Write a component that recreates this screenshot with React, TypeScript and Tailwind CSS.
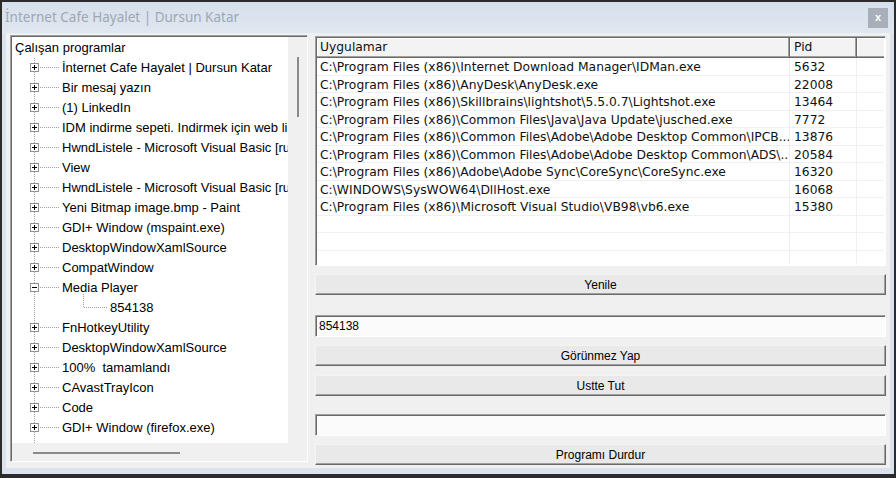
import React from 'react';

type Kind = 'plus' | 'minus' | 'child';

const treeItems: { t: string; k: Kind }[] = [
    { t: 'İnternet Cafe Hayalet | Dursun Katar', k: 'plus' },
    { t: 'Bir mesaj yazın', k: 'plus' },
    { t: '(1) LinkedIn', k: 'plus' },
    { t: 'IDM indirme sepeti. Indirmek için web linklerini buraya sürükleyin', k: 'plus' },
    { t: 'HwndListele - Microsoft Visual Basic [run]', k: 'plus' },
    { t: 'View', k: 'plus' },
    { t: 'HwndListele - Microsoft Visual Basic [run]', k: 'plus' },
    { t: 'Yeni Bitmap image.bmp - Paint', k: 'plus' },
    { t: 'GDI+ Window (mspaint.exe)', k: 'plus' },
    { t: 'DesktopWindowXamlSource', k: 'plus' },
    { t: 'CompatWindow', k: 'plus' },
    { t: 'Media Player', k: 'minus' },
    { t: '854138', k: 'child' },
    { t: 'FnHotkeyUtility', k: 'plus' },
    { t: 'DesktopWindowXamlSource', k: 'plus' },
    { t: '100%  tamamlandı', k: 'plus' },
    { t: 'CAvastTrayIcon', k: 'plus' },
    { t: 'Code', k: 'plus' },
    { t: 'GDI+ Window (firefox.exe)', k: 'plus' },
    { t: 'Dev kontrolleri bekleniyor', k: 'plus' },
];

const apps: [string, string][] = [
    ['C:\\Program Files (x86)\\Internet Download Manager\\IDMan.exe', '5632'],
    ['C:\\Program Files (x86)\\AnyDesk\\AnyDesk.exe', '22008'],
    ['C:\\Program Files (x86)\\Skillbrains\\lightshot\\5.5.0.7\\Lightshot.exe', '13464'],
    ['C:\\Program Files (x86)\\Common Files\\Java\\Java Update\\jusched.exe', '7772'],
    ['C:\\Program Files (x86)\\Common Files\\Adobe\\Adobe Desktop Common\\IPCB...', '13876'],
    ['C:\\Program Files (x86)\\Common Files\\Adobe\\Adobe Desktop Common\\ADS\\...', '20584'],
    ['C:\\Program Files (x86)\\Adobe\\Adobe Sync\\CoreSync\\CoreSync.exe', '16320'],
    ['C:\\WINDOWS\\SysWOW64\\DllHost.exe', '16068'],
    ['C:\\Program Files (x86)\\Microsoft Visual Studio\\VB98\\vb6.exe', '15380'],
    ['', ''],
    ['', ''],
    ['', ''],
    ['', ''],
];

function Connector({ kind }: { kind: Kind }) {
    const dot = { stroke: '#a0a0a0', strokeWidth: 1, strokeDasharray: '1 1' };
    if (kind === 'child') {
        return (
            <svg width="98" height="20" className="shrink-0 overflow-visible" shapeRendering="crispEdges">
                <line x1="22.5" y1="0" x2="22.5" y2="20" {...dot} />
                <line x1="71.5" y1="-4" x2="71.5" y2="10" {...dot} />
                <line x1="72" y1="9.5" x2="96" y2="9.5" {...dot} />
            </svg>
        );
    }
    return (
        <svg width="50" height="20" className="shrink-0" shapeRendering="crispEdges">
            <line x1="22.5" y1="0" x2="22.5" y2="5" {...dot} />
            <line x1="22.5" y1="14" x2="22.5" y2="20" {...dot} />
            <rect x="18.5" y="5.5" width="8" height="8" fill="#fff" stroke="#919191" />
            <line x1="20" y1="9.5" x2="25" y2="9.5" stroke="#000" />
            {kind === 'plus' && <line x1="22.5" y1="7" x2="22.5" y2="12" stroke="#000" />}
            <line x1="28" y1="9.5" x2="48" y2="9.5" {...dot} />
        </svg>
    );
}

function Button({ label }: { label: string }) {
    return (
        <button className="block h-[21px] w-full bg-[#e9e9e9] border border-t-[#f4f4f4] border-l-[#f4f4f4] border-b-[#696969] border-r-[#696969] shadow-[inset_-1px_-1px_0_#a0a0a0] text-[12px] text-black leading-none">
            {label}
        </button>
    );
}

function Input({ value }: { value: string }) {
    return (
        <div className="h-[22px] w-full bg-[#fbfbfb] border border-t-[#a0a0a0] border-l-[#a0a0a0] border-b-[#fff] border-r-[#fff] shadow-[inset_1px_1px_0_#696969] flex items-center pl-[3px] text-[12px] text-black">
            {value}
        </div>
    );
}

export default function App() {
    return (
        <div className="w-[896px] h-[478px] bg-[#2b2b2b] p-[2px] pb-[4px] font-['Liberation_Sans',Arial,sans-serif]">
            <div className="h-full flex flex-col bg-[#dbe4ee] px-[4px] pb-[6px]">
                {/* title bar */}
                <div className="shrink-0 h-[31px] -mx-[4px] flex items-center justify-between pl-[3px] pr-[6px] bg-gradient-to-b from-[#d6e0eb] to-[#dfe7f0]">
                    <span className="font-['Noto_Sans',sans-serif] text-[13.5px] text-[#9ea7b1]">İnternet Cafe Hayalet | Dursun Katar</span>
                    <div className="w-[20px] h-[20px] bg-[#a7b0b9] flex items-center justify-center text-white font-bold text-[11px] leading-none">x</div>
                </div>

                {/* client */}
                <div className="flex-1 min-h-0 bg-[#f0f0f0] flex gap-[7px] px-[4px] pt-[2px] pb-[2px]">
                    {/* tree */}
                    <div className="w-[298px] h-[427px] border border-t-[#a0a0a0] border-l-[#a0a0a0] border-b-[#fff] border-r-[#fff] shadow-[inset_1px_1px_0_#696969] p-[1px]">
                        <div className="h-full grid grid-cols-[276px_18px] grid-rows-[406px_17px]">
                            <div className="bg-white overflow-hidden text-[13px] text-black pt-[1px]">
                                <div className="h-[20px] flex items-center pl-[3px] whitespace-nowrap">Çalışan programlar</div>
                                {treeItems.map((it, i) => (
                                    <div key={i} className="h-[20px] flex items-center whitespace-pre">
                                        <Connector kind={it.k} />
                                        <span>{it.t}</span>
                                    </div>
                                ))}
                            </div>
                            <div className="bg-[#f0f0f0] flex justify-center pt-[20px]">
                                <div className="w-[2px] h-[60px] bg-[#8a8a8a] ml-[2px]" />
                            </div>
                            <div className="bg-[#f0f0f0] pl-[21px] pt-[9px]">
                                <div className="w-[147px] h-[2px] bg-[#8a8a8a]" />
                            </div>
                            <div className="bg-[#f0f0f0]" />
                        </div>
                    </div>

                    {/* right column */}
                    <div className="flex-1 flex flex-col pt-[1px]">
                        <div className="shrink-0 h-[230px] bg-white border border-t-[#a0a0a0] border-l-[#a0a0a0] border-b-[#fff] border-r-[#fff] shadow-[inset_1px_1px_0_#696969] p-[1px] overflow-hidden font-['DejaVu_Sans',Verdana,sans-serif] text-[12.3px] text-[#111]">
                            <div className="flex h-[20px] bg-[#f3f3f3]">
                                <div className="w-[473px] border-r border-b border-[#696969] shadow-[inset_-1px_-1px_0_#a0a0a0,inset_1px_1px_0_#fff] flex items-center pl-[3px]">Uygulamar</div>
                                <div className="w-[67px] border-r border-b border-[#696969] shadow-[inset_-1px_-1px_0_#a0a0a0,inset_1px_1px_0_#fff] flex items-center pl-[4px]">Pid</div>
                                <div className="flex-1 border-b border-[#696969] shadow-[inset_0_-1px_0_#a0a0a0,inset_1px_1px_0_#fff]" />
                            </div>
                            {apps.map(([p, pid], i) => (
                                <div key={i} className="flex h-[17.5px] border-b border-[#f0f0f0] whitespace-nowrap">
                                    <div className="w-[473px] border-r border-[#f0f0f0] flex items-center pl-[3px] pt-[2px] overflow-hidden">{p}</div>
                                    <div className="w-[67px] border-r border-[#f0f0f0] flex items-center pl-[4px] pt-[2px]">{pid}</div>
                                    <div className="flex-1" />
                                </div>
                            ))}
                        </div>
                        <div className="mt-[8px]"><Button label="Yenile" /></div>
                        <div className="mt-[20px]"><Input value="854138" /></div>
                        <div className="mt-[8px]"><Button label="Görünmez Yap" /></div>
                        <div className="mt-[9px]"><Button label="Ustte Tut" /></div>
                        <div className="mt-[18px]"><Input value="" /></div>
                        <div className="mt-[8px]"><Button label="Programı Durdur" /></div>
                    </div>
                </div>
            </div>
        </div>
    );
}
